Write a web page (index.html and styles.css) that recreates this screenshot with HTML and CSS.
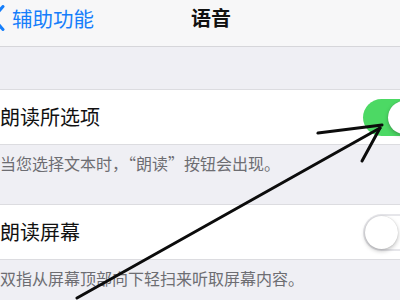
FILE: index.html
```html
<!DOCTYPE html>
<html lang="zh-CN">
<head>
<meta charset="utf-8">
<title>语音</title>
<link rel="stylesheet" href="styles.css">
</head>
<body>
<div class="screen">
  <header class="nav">
    <a class="back">
      <svg class="chevron" width="14" height="26" viewBox="0 0 14 26"><path d="M12 1.5 L1.8 13 L12 24.5" fill="none" stroke="#157efb" stroke-width="3" stroke-linecap="round" stroke-linejoin="round"/></svg>
      <span>辅助功能</span>
    </a>
    <h1 class="title">语音</h1>
    <span></span>
  </header>
  <div class="spacer"></div>
  <section class="group">
    <div class="row">
      <span class="label">朗读所选项</span>
      <span class="switch on"></span>
    </div>
  </section>
  <p class="footer">当您选择文本时，“朗读”按钮会出现。</p>
  <section class="group">
    <div class="row">
      <span class="label">朗读屏幕</span>
      <span class="switch off"></span>
    </div>
  </section>
  <p class="footer">双指从屏幕顶部向下轻扫来听取屏幕内容。</p>
  <svg class="annotation" width="400" height="300" viewBox="0 0 400 300">
    <g fill="none" stroke="#0c0c0c" stroke-width="3" stroke-linecap="round">
      <path d="M77 298 L380 128"/>
      <path d="M318 133 L382 125"/>
      <path d="M362 161 L380 128"/>
    </g>
  </svg>
</div>
</body>
</html>
```
FILE: styles.css
```css
html, body {
  margin: 0;
  padding: 0;
}
body {
  width: 400px;
  height: 300px;
  overflow: hidden;
  background: #efeff4;
  font-family: "Noto Sans CJK SC", "Noto Sans", sans-serif;
}
.screen {
  position: relative;
  width: 400px;
  height: 300px;
  overflow: hidden;
  background: #efeff4;
}
.nav {
  display: grid;
  grid-template-columns: 1fr auto 1fr;
  align-items: center;
  height: 36px;
  padding: 0 0 10px 22px;
  background: #f7f7f8;
  border-bottom: 1px solid #d6d6da;
}
.back {
  display: flex;
  align-items: center;
  gap: 7px;
  margin-left: -22px;
  color: #157efb;
  font-size: 20.5px;
  line-height: 24px;
}
.chevron {
  margin-left: -9px;
  flex: none;
}
.title {
  margin: 0;
  font-size: 20px;
  font-weight: 600;
  line-height: 24px;
  color: #111;
}
.spacer {
  height: 42px;
}
.group {
  background: #fff;
  border-top: 1px solid #dcdce0;
  border-bottom: 1px solid #dcdce0;
}
.row {
  display: flex;
  align-items: center;
  justify-content: space-between;
  height: 54px;
}
.label {
  font-size: 20px;
  color: #111;
  line-height: 24px;
}
.switch {
  position: relative;
  flex: none;
  width: 60px;
  height: 37px;
  margin-right: -23px;
  border-radius: 19px;
  box-sizing: border-box;
}
.switch::after {
  content: "";
  position: absolute;
  top: 2px;
  width: 33px;
  height: 33px;
  border-radius: 50%;
  background: #fff;
  box-shadow: 0 2px 4px rgba(0,0,0,0.25), 0 0 1px rgba(0,0,0,0.2);
}
.switch.on {
  background: #4cd964;
}
.switch.on::after {
  right: 2px;
}
.switch.off {
  background: #fff;
  box-shadow: inset 0 0 0 2px #e6e6ea;
}
.switch.off::after {
  left: 2px;
}
.footer {
  margin: 0;
  height: 20px;
  padding: 8px 0 31px;
  font-size: 16px;
  line-height: 20px;
  color: #6d6d72;
  white-space: nowrap;
}
.annotation {
  position: absolute;
  left: 0;
  top: 0;
  pointer-events: none;
}
```
